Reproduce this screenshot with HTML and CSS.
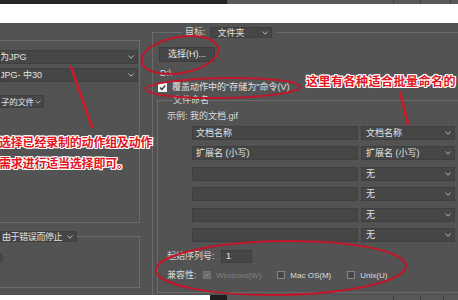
FILE: index.html
```html
<!DOCTYPE html>
<html lang="zh-CN">
<head>
<meta charset="utf-8">
<title>批处理</title>
<link rel="stylesheet" href="styles.css">
</head>
<body>
<div class="topbar">
  <div class="tb-dark"></div>
  <div class="tb-seg tb-s1"></div>
  <div class="tb-seg tb-s2"></div>
  <div class="tb-seg tb-s3"></div>
  <div class="tb-seg tb-s4"></div>
</div>
<div class="whiteband"></div>

<div class="main">
  <div class="left">
    <div class="group1">
      <div class="dd dd-wide"><span class="dd-text clip">为JPG</span><svg class="chev" viewBox="0 0 6 4" width="6" height="4"><polyline points="0.5,0.5 3,3.2 5.5,0.5"/></svg></div>
      <div class="dd dd-wide dd-second"><span class="dd-text clip">JPG- 中30</span><svg class="chev" viewBox="0 0 6 4" width="6" height="4"><polyline points="0.5,0.5 3,3.2 5.5,0.5"/></svg></div>
      <div class="dd dd-small"><span class="dd-text small-text">子的文件</span><svg class="chev" viewBox="0 0 6 4" width="6" height="4"><polyline points="0.5,0.5 3,3.2 5.5,0.5"/></svg></div>
    </div>
    <fieldset class="group2">
      <legend class="g2-legend"><div class="dd dd-err"><span class="dd-text tight">由于错误而停止</span><svg class="chev" viewBox="0 0 6 4" width="6" height="4"><polyline points="0.5,0.5 3,3.2 5.5,0.5"/></svg></div></legend>
      <div class="stub"></div>
    </fieldset>
  </div>

  <div class="right">
    <fieldset class="target">
      <legend class="target-legend"><span class="target-label">目标:</span><div class="dd dd-target"><span class="dd-text">文件夹</span><svg class="chev" viewBox="0 0 6 4" width="6" height="4"><polyline points="0.5,0.5 3,3.2 5.5,0.5"/></svg></div></legend>
      <div class="btn">选择(H)...</div>
      <div class="path">D:\</div>
      <div class="check-row"><span class="cb cb-on"><svg viewBox="0 0 9 9" width="9" height="9"><polyline points="2,4.6 3.8,6.4 7.2,2.6"/></svg></span><span class="check-label">覆盖动作中的"存储为"命令(V)</span></div>

      <fieldset class="naming">
        <legend class="naming-legend">文件命名</legend>
        <div class="example">示例: 我的文档.gif</div>
        <div class="rows">
          <div class="row"><div class="field">文档名称</div><div class="dd dd-row"><span class="dd-text">文档名称</span><svg class="chev" viewBox="0 0 6 4" width="6" height="4"><polyline points="0.5,0.5 3,3.2 5.5,0.5"/></svg></div></div>
          <div class="row"><div class="field">扩展名 (小写)</div><div class="dd dd-row"><span class="dd-text">扩展名 (小写)</span><svg class="chev" viewBox="0 0 6 4" width="6" height="4"><polyline points="0.5,0.5 3,3.2 5.5,0.5"/></svg></div></div>
          <div class="row"><div class="field"></div><div class="dd dd-row"><span class="dd-text">无</span><svg class="chev" viewBox="0 0 6 4" width="6" height="4"><polyline points="0.5,0.5 3,3.2 5.5,0.5"/></svg></div></div>
          <div class="row"><div class="field"></div><div class="dd dd-row"><span class="dd-text">无</span><svg class="chev" viewBox="0 0 6 4" width="6" height="4"><polyline points="0.5,0.5 3,3.2 5.5,0.5"/></svg></div></div>
          <div class="row"><div class="field"></div><div class="dd dd-row"><span class="dd-text">无</span><svg class="chev" viewBox="0 0 6 4" width="6" height="4"><polyline points="0.5,0.5 3,3.2 5.5,0.5"/></svg></div></div>
          <div class="row"><div class="field"></div><div class="dd dd-row"><span class="dd-text">无</span><svg class="chev" viewBox="0 0 6 4" width="6" height="4"><polyline points="0.5,0.5 3,3.2 5.5,0.5"/></svg></div></div>
        </div>
        <div class="serial"><span class="lbl lbl-serial">起始序列号:</span><div class="field field-serial">1</div></div>
        <div class="compat">
          <span class="lbl lbl-compat">兼容性:</span>
          <span class="cb cb-dis"><svg viewBox="0 0 8 8" width="8" height="8"><polyline points="1.6,4 3.3,5.7 6.4,2.3"/></svg></span>
          <span class="opt opt-dis">Windows(W)</span>
          <span class="cb cb-off cb-gap"></span>
          <span class="opt">Mac OS(M)</span>
          <span class="cb cb-off cb-gap"></span>
          <span class="opt">Unix(U)</span>
        </div>
      </fieldset>
    </fieldset>
  </div>
</div>

<div class="bottombar">
  <div class="bb-white"></div>
  <div class="bb-dark"></div>
  <div class="bb-seg bb-s1"></div>
  <div class="bb-seg bb-s2"></div>
  <div class="bb-seg bb-s3"></div>
  <div class="bb-seg bb-s4"></div>
</div>

<svg class="marks" viewBox="0 0 458 300" width="458" height="300">
  <ellipse cx="180" cy="55" rx="39" ry="18" transform="rotate(-10 180 55)"/>
  <ellipse cx="223" cy="88" rx="77" ry="10" transform="rotate(-1 223 88)"/>
  <ellipse cx="281" cy="268" rx="125" ry="27" transform="rotate(-1 281 268)"/>
  <line class="arrow" x1="71" y1="67" x2="92" y2="127"/>
  <line class="arrow" x1="400" y1="92" x2="408" y2="124"/>
</svg>

<div class="note note-left">选择已经录制的动作组及动作<br>需求进行适当选择即可。</div>
<div class="note note-right">这里有各种适合批量命名的</div>
</body>
</html>
```

FILE: styles.css
```css
* { box-sizing: border-box; }

html, body {
  margin: 0;
  padding: 0;
}

body {
  position: relative;
  width: 458px;
  height: 300px;
  overflow: hidden;
  background: #535353;
  font-family: "Liberation Sans", "Noto Sans CJK SC", sans-serif;
  font-size: 9px;
  color: #d9d9d9;
}

/* top and bottom strips */
.topbar {
  display: flex;
  height: 4px;
}
.tb-dark { width: 227px; background: #262626; }
.tb-seg { background: #5a5a5a; border-right: 1px solid #404040; }
.tb-s1 { width: 167px; }
.tb-s2 { width: 27px; }
.tb-s3 { width: 30px; }
.tb-s4 { flex: 1; border-right: none; }

.whiteband {
  height: 19px;
  background: #ffffff;
}

.bottombar {
  display: flex;
  height: 5px;
}
.bb-white { width: 210px; background: #ffffff; }
.bb-dark { width: 17px; background: #1e1e1e; }
.bb-seg { background: #585858; border-right: 1px solid #404040; }
.bb-s1 { width: 167px; }
.bb-s2 { width: 27px; }
.bb-s3 { width: 23px; }
.bb-s4 { flex: 1; border-right: none; }

/* main panel */
.main {
  display: flex;
  align-items: flex-start;
  height: 272px;
  overflow: hidden;
}

.left {
  flex: none;
  width: 152px;
}

.right {
  flex: none;
  width: 320px;
}

fieldset {
  margin: 0;
  padding: 0;
  min-width: 0;
  border: 1px solid #6b6b6b;
}

legend {
  padding: 0;
}

/* dropdowns */
.dd {
  display: flex;
  align-items: center;
  height: 14px;
  padding: 0 3px 0 4px;
  background: #464646;
  border: 1px solid #3f3f3f;
  color: #e2e2e2;
  line-height: 12px;
  white-space: nowrap;
  overflow: hidden;
}
.dd-text {
  flex: 1 1 auto;
  min-width: 0;
  overflow: hidden;
}
.chev {
  flex: none;
  fill: none;
  stroke: #b5b5b5;
  stroke-width: 1;
}
.clip { margin-left: -5px; }
.tight { letter-spacing: -0.4px; }

/* left column */
.group1 {
  width: 140px;
  height: 183px;
  margin-top: 17px;
  padding-top: 9px;
  border-top: 1px solid #6b6b6b;
  border-right: 1px solid #6b6b6b;
  border-bottom: 1px solid #6b6b6b;
}
.dd-wide { width: 138px; }
.dd-second { margin-top: 4px; }
.dd-small {
  width: 44px;
  height: 13px;
  margin-top: 13px;
  padding: 0 2px 0 0;
}
.small-text {
  flex: none;
  font-size: 8.5px;
  letter-spacing: -0.3px;
  margin-right: 1px;
}

.group2 {
  width: 140px;
  height: 57px;
  margin-top: 8px;
  border-left: none;
}
.dd-err {
  width: 77px;
  height: 11px;
  padding-left: 1px;
}
.stub {
  width: 3px;
  height: 10px;
  margin-top: 11px;
  background: #464646;
}

/* right column */
.target {
  width: 320px;
  height: 290px;
  margin-top: 4px;
}
.target-legend {
  display: flex;
  align-items: center;
  gap: 4px;
  margin-left: 29px;
  padding: 0 4px 0 3px;
  line-height: 11px;
}
.target-label { color: #dadada; }
.dd-target {
  width: 62px;
  height: 11px;
  padding-left: 7px;
}

.btn {
  width: 56px;
  height: 15px;
  margin: 9px 0 0 6px;
  background: #454545;
  border: 1px solid #3d3d3d;
  color: #e6e6e6;
  line-height: 13px;
  text-align: center;
}

.path {
  margin-top: 5px;
  padding-left: 7px;
  line-height: 12px;
}

.check-row {
  display: flex;
  align-items: center;
  height: 9px;
  margin: 4px 0 0 5px;
}
.check-label {
  margin-left: 5px;
  line-height: 11px;
  color: #e2e2e2;
}

.cb {
  flex: none;
  display: flex;
  align-items: center;
  justify-content: center;
  width: 8px;
  height: 8px;
}
.cb svg {
  fill: none;
  stroke-width: 1.4;
}
.cb-on {
  width: 9px;
  height: 9px;
  background: #f2f2f2;
}
.cb-on svg { stroke: #303030; }
.cb-dis {
  background: #6a6a6a;
  border: 1px solid #737373;
}
.cb-dis svg { stroke: #8c8c8c; }
.cb-off {
  background: #474747;
  border: 1px solid #858585;
}
.cb-gap { margin-left: 16px; }

.naming {
  width: 310px;
  height: 199px;
  margin: 2px 0 0 4px;
}
.naming-legend {
  margin-left: 15px;
  line-height: 12px;
}

.example {
  margin-top: 4px;
  padding-left: 9px;
  line-height: 12px;
}

.rows {
  display: flex;
  flex-direction: column;
  gap: 6.4px;
  margin-top: 4px;
}
.row {
  display: flex;
  height: 14px;
}
.field {
  width: 166px;
  height: 14px;
  margin-left: 34px;
  padding-left: 3px;
  background: #464646;
  border: 1px solid #3f3f3f;
  color: #e2e2e2;
  line-height: 12px;
  white-space: nowrap;
}
.dd-row {
  width: 94px;
  margin-left: 3px;
}

.serial {
  display: flex;
  align-items: center;
  margin-top: 8px;
  padding-left: 9px;
}
.lbl { flex: none; line-height: 11px; }
.lbl-serial { width: 54px; }
.field-serial {
  width: 31px;
  height: 13px;
  margin-left: 0;
  padding-left: 4px;
  line-height: 11px;
}

.compat {
  display: flex;
  align-items: center;
  height: 11px;
  margin-top: 7px;
  padding-left: 9px;
}
.lbl-compat { width: 36px; }
.opt {
  margin-left: 5px;
  font-size: 8px;
  line-height: 11px;
  color: #dcdcdc;
}
.opt-dis { color: #7e7e7e; }

/* red annotations drawn over the dialog */
.marks {
  position: absolute;
  left: 0;
  top: 0;
  pointer-events: none;
}
.marks ellipse {
  fill: none;
  stroke: #c4162a;
  stroke-width: 2;
}
.marks .arrow {
  stroke: #cf1a24;
  stroke-width: 2.4;
  stroke-linecap: round;
}

.note {
  position: absolute;
  font-family: "Noto Sans CJK SC", sans-serif;
  font-weight: 700;
  font-size: 12px;
  color: #e3141c;
  white-space: nowrap;
  text-shadow:
    1px 0 0 #fff, -1px 0 0 #fff, 0 1px 0 #fff, 0 -1px 0 #fff,
    1px 1px 0 #fff, -1px -1px 0 #fff, 1px -1px 0 #fff, -1px 1px 0 #fff;
}
.note-left {
  left: -1px;
  top: 131px;
  line-height: 21px;
  letter-spacing: -0.2px;
}
.note-right {
  left: 306px;
  top: 73px;
  line-height: 16px;
  letter-spacing: 0.5px;
}
```
